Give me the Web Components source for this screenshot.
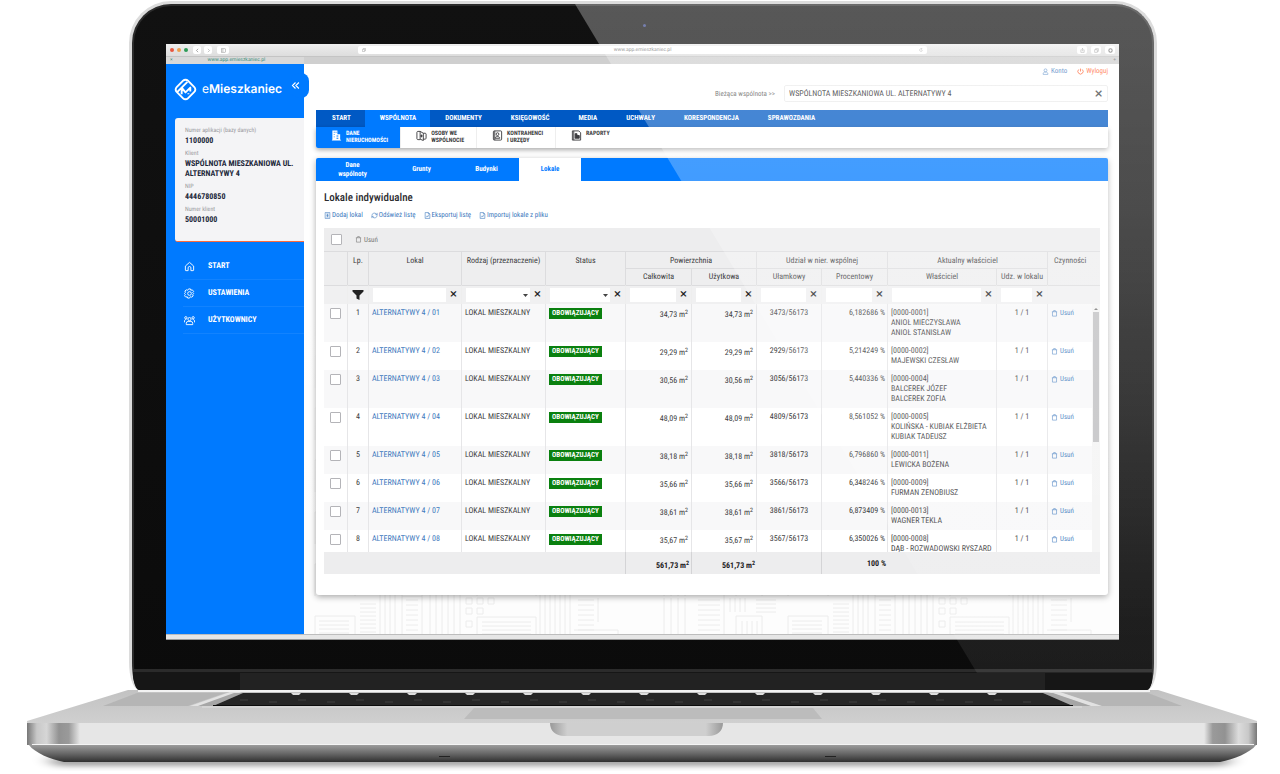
<!DOCTYPE html>
<html lang="pl">
<head>
<meta charset="utf-8">
<meta name="viewport" content="width=device-width, initial-scale=1">
<title>eMieszkaniec – Lokale indywidualne</title>
<style>
  :root {
    --blue: #007aff;
    --ink: #3c3c40;
    --link: #3c78bd;
    --line: #dcdcde;
    --fs-xs: 6px;
    --fs-s: 7px;
    --fs-m: 8px;
    --fs-l: 11px;
    --ui: "Roboto Condensed", "Liberation Sans Narrow", Roboto, sans-serif;
  }
  body { margin: 0; background: #fff; color: var(--ink); font: 8px/10px var(--ui); text-rendering: geometricPrecision; overflow-x: hidden; }
</style>
</head>
<body>
<laptop-frame>
  <browser-window>
    <app-sidebar></app-sidebar>
    <app-main>
      <account-bar></account-bar>
      <main-nav></main-nav>
      <sub-nav></sub-nav>
      <content-panel>
        <units-table></units-table>
      </content-panel>
    </app-main>
  </browser-window>
</laptop-frame>

<script>
const RESET = `
  *, *::before, *::after { box-sizing: border-box; }
  button, input, select { font: inherit; color: inherit; text-rendering: inherit; margin: 0; padding: 0; border: 0; background: none; border-radius: 0; }
  button { cursor: pointer; }
  a { color: inherit; text-decoration: none; }
  ul, dl, dd, h1 { margin: 0; padding: 0; list-style: none; }
  svg { display: block; }
`;
function define(name, css, html) {
  const tpl = document.createElement('template');
  tpl.innerHTML = `<style>${RESET}${css}</style>${html}`;
  customElements.define(name, class extends HTMLElement {
    constructor() {
      super();
      this.attachShadow({ mode: 'open' }).append(tpl.content.cloneNode(true));
    }
  });
}

const ICONS = {
  home: '<path d="M3 11 12 3l9 8v9a1 1 0 0 1-1 1h-5v-6a3 3 0 0 0-6 0v6H4a1 1 0 0 1-1-1z"/>',
  gear: '<path d="M10 2h4l1 3 3-1 3 3.500-2 2.500 2 2-2 2.500 1 3-3 2.500-3-1-2 3h-4l-1-3-3 1-3-3 2-3-2-2 2-2.500-1-3 3-2.500 3 1z"/><circle cx="12" cy="12" r="4"/>',
  users: '<circle cx="12" cy="9" r="3.500"/><path d="M5 21v-3a4 4 0 0 1 4-4h6a4 4 0 0 1 4 4v3z"/><circle cx="4" cy="6" r="2.500"/><circle cx="20" cy="6" r="2.500"/><path d="M1 16v-3c0-2 1-3 4-3M23 16v-3c0-2-1-3-4-3"/>',
  user: '<circle cx="12" cy="8" r="5"/><path d="M4 22v-3c0-3 3-5 8-5s8 2 8 5v3z"/>',
  power: '<path d="M12 2v10M6 5a9 9 0 1 0 12 0"/>',
  trash: '<path d="M3 6h18M5 6v15h14V6M9 6V2h6v4"/>',
  add: '<path d="M4 2h16v20H4zM8 7h8M8 12h8M8 17h8M12 7v10"/>',
  refresh: '<path d="M3 13a9 8 0 0 1 15-7l3 3M21 3v6h-6M21 11a9 8 0 0 1-15 7l-3-3M3 21v-6h6"/>',
  file: '<path d="M4 2h11l5 5v15H4zM15 2v5h5M8 18l3-5 2 3 3-5"/>',
  building: '<path fill="currentColor" stroke="none" d="M3 1h11v8h6v12h2v2H2v-2h1zM6 4v2h2V4zM10 4v2h2V4zM6 9v2h2V9zM6 14v2h2v-2zM12 12v2h4v-2zM12 17v2h4v-2z" fill-rule="evenodd"/>',
  people: '<path d="M9 3H4C3 3 2 4 2 5v14c0 1 1 2 2 2h5M9 3l7 4v16l-7-3zM16 7h4c1 0 2 1 2 2v9c0 1-1 2-2 2h-4M12 10v6M9 13h6"/>',
  contact: '<rect x="3" y="2" width="18" height="20" rx="2"/><circle cx="12" cy="9" r="3"/><path d="M7 18c0-5 10-5 10 0zM6 2v20"/>',
  report: '<path d="M3 2h14l4 4v16H3zM6 2v20"/><path fill="currentColor" d="M9 8h4v4h5v6H9z"/>',
  filter: '<path fill="currentColor" stroke="none" d="M1 2h22v3l-8 8v9l-6-3v-6L1 5z"/>',
  left: '<path d="M15 4l-8 8 8 8"/>',
  right: '<path d="M9 4l8 8-8 8"/>',
  double: '<path d="M12 4l-8 8 8 8M21 4l-8 8 8 8"/>',
  pane: '<rect x="2" y="4" width="20" height="16"/><path d="M9 4v16"/>',
  share: '<path d="M8 9H4v12h16V9h-4M12 15V2M8 6l4-4 4 4"/>',
  copy: '<path d="M8 8V3h13v13h-5M3 8h13v13H3z"/>',
  reload: '<path d="M20 12a8 8 0 1 1-3-6M17 1v6h-6"/>',
  ring: '<circle cx="12" cy="12" r="8"/>'
};
customElements.define('app-icon', class extends HTMLElement {
  connectedCallback() {
    if (this.shadowRoot) return;
    const w = this.getAttribute('weight') || 2;
    this.attachShadow({ mode: 'open' }).innerHTML = `
      <style>:host{display:block;flex:none;width:var(--icon,8px);height:var(--icon,8px)} svg{display:block;width:100%;height:100%}</style>
      <svg viewBox="0 0 24 24" fill="none" stroke="currentColor" stroke-width="${w}" aria-hidden="true">${ICONS[this.getAttribute('name')]}</svg>`;
  }
});

/* ---------- laptop ---------- */
const keyGaps = Array.from({ length: 13 }, (_, i) => `<path fill="#ddd" d="M${291 + i * 58} 3h10l-2 2h-6z"/>`).join('');
const keyRows = Array.from({ length: 28 }, (_, i) => `<path stroke="#404040" d="M${240 + i * 29} ${i % 2 ? 12 : 10}h8"/>`).join('');
define('laptop-frame', `
  :host { display: block; }
  .top { display: grid; grid-template-columns: 129fr 1028fr 123fr; }
  .lid { grid-column: 2; position: relative; margin-top: 1px; padding: 40px 35px 0 34px; border: 3px solid #dcdcdc; border-bottom: 0;
    border-radius: 42px 42px 10px 10px / 42px 42px 28px 28px; background: linear-gradient(#111, #0b0b0b); overflow: hidden;
    box-shadow: inset 0 0 0 2px #2c2c2c; }
  .glare { position: absolute; inset: 0; z-index: 2; pointer-events: none;
    background: linear-gradient(#ffffff4c 0%, #ffffff40 30%, #ffffff2c 60%, #ffffff14 90%, #ffffff12 97%);
    clip-path: polygon(443px 0, 100% 0, 100% 669px, 845px 669px); }
  .cam { position: absolute; top: 20px; left: 50%; width: 3px; height: 3px; border-radius: 50%; background: #3d4a8c; }
  .hinge { height: 21px; margin: 29px -33px 0; border-top: 3px solid #2b2b2b; background: #161616; display: flex; justify-content: center; }
  .hinge i { width: 79%; margin-top: 1px; background: #222; }
  .base { width: 100%; height: auto; }
`, `
  <div class="top"><div class="lid"><slot></slot><div class="hinge"><i></i></div><span class="cam"></span><div class="glare"></div></div></div>
  <svg class="base" viewBox="0 0 1280 84" aria-hidden="true">
    <defs>
      <linearGradient id="front"><stop offset="0" stop-color="#777"/><stop offset=".008" stop-color="#c8c8c8"/><stop offset=".016" stop-color="#d6d6d6"/><stop offset=".026" stop-color="#929292"/><stop offset=".034" stop-color="#9a9a9a"/><stop offset=".043" stop-color="#e6e6e6"/><stop offset=".957" stop-color="#e6e6e6"/><stop offset=".964" stop-color="#9a9a9a"/><stop offset=".974" stop-color="#929292"/><stop offset=".985" stop-color="#dcdcdc"/><stop offset=".993" stop-color="#c8c8c8"/><stop offset="1" stop-color="#777"/></linearGradient>
      <linearGradient id="deck" x2="0" y2="1"><stop offset="0" stop-color="#c2c2c2"/><stop offset="1" stop-color="#d0d0d0"/></linearGradient>
      <linearGradient id="under" x2="0" y2="1"><stop offset="0" stop-color="#9c9c9c"/><stop offset=".5" stop-color="#686868"/><stop offset="1" stop-color="#303030"/></linearGradient>
      <linearGradient id="notch"><stop offset="0" stop-color="#999"/><stop offset=".1" stop-color="#cfcfcf"/><stop offset=".9" stop-color="#cfcfcf"/><stop offset="1" stop-color="#999"/></linearGradient>
      <filter id="soft" x="-5%" y="-100%" width="110%" height="300%"><feGaussianBlur stdDeviation="8 3"/></filter>
    </defs>
    <path fill="#000" opacity=".5" filter="url(#soft)" d="M45 69h1190l-12 6H57z"/>
    <path fill="url(#deck)" d="M128 0h1030l99 31v3H27v-3z"/>
    <path fill="#f2f2f2" d="M138 0h1012v2H138z"/>
    <path fill="#b5b5b5" d="M137 3h88l-37 13h-85zM1062 3h86l34 13h-82z"/>
    <path fill="#e2e2e2" d="M230 2h12l-40 14h-12zM1048 2h12l42 14h-12z"/>
    <path fill="#a6a6a6" d="M234 3h9l-30 13h-15zM1043 3h10l38 13h-18z"/>
    <path fill="#262626" d="M243 3h800l30 13H213z"/>
    ${keyGaps}${keyRows}
    <path stroke="#0c0c0c" d="M213 15.500h860"/>
    <path stroke="#eee" d="M202 17h880" opacity=".6"/>
    <path fill="#bcbcbc" d="M474 18h339l9 11H464z"/>
    <path fill="url(#front)" d="M27 33h1230v22H27z"/>
    <path fill="url(#notch)" d="M550 33h173c0 8-6 13-14 13H564c-8 0-14-5-14-13z"/>
    <path fill="#f4f4f4" d="M32 54h1222v1H32z"/>
    <path fill="url(#under)" d="M29 55h1227c-6 8-22 14-36 17H64C50 69 35 63 29 55z"/>
    <path fill="#222" d="M439 66h11v1h-11zM825 66h11v1h-11z"/>
  </svg>
`);

/* ---------- browser ---------- */
define('browser-window', `
  :host { display: block; background: #fff; color: #777; }
  .bar { display: grid; grid-template-columns: 192px 1fr 192px; align-items: center; height: 12px; background: linear-gradient(#eee, #ddd); }
  .left, .right { display: flex; align-items: center; gap: 4px; padding: 0 4px; --icon: 5px; }
  .right { justify-content: flex-end; }
  .dot { width: 4px; height: 4px; border-radius: 50%; background: #e8573f; }
  .dot:nth-child(2) { background: #eda04e; } .dot:nth-child(3) { background: #2e9b57; margin-right: 2px; }
  .left { gap: 3px; }
  button { display: grid; place-items: center; width: 10px; height: 8px; border-radius: 2px; background: #fff; }
  .left button { width: 8px; } .left button:last-child { margin-left: 2px; width: 12px; }
  .url { display: flex; align-items: center; justify-content: space-between; height: 8px; padding: 0 4px; border-radius: 2px; background: #fff; --icon: 4px; }
  .url input { width: 70px; height: 8px; text-align: center; font: 5px/8px Roboto, sans-serif; }
  .tabs { display: flex; height: 8px; background: #cfcfcf; border-top: 1px solid #c4c4c4; font: 5px/7px Roboto, sans-serif; }
  .tab { display: flex; width: 138px; padding: 0 4px; background: #d9d9d9; color: #3f8f7c; }
  .tab a { flex: 1; text-align: center; }
  .plus { margin-left: auto; padding-right: 3px; }
  .app { display: grid; grid-template-columns: 138px 1fr; font: var(--fs-m)/10px var(--ui); color: var(--ink); }
  .status { height: 6px; background: #e6e6e6; border-top: 1px solid #bdbdbd; border-bottom: 1px solid #999; }
`, `
  <div class="bar">
    <div class="left"><i class="dot"></i><i class="dot"></i><i class="dot"></i>
      <button aria-label="Wstecz"><app-icon name="left" weight="3"></app-icon></button><button aria-label="Dalej"><app-icon name="right"></app-icon></button><button aria-label="Panel boczny"><app-icon name="pane"></app-icon></button></div>
    <div class="url"><app-icon name="copy"></app-icon><input aria-label="Adres strony" value="www.app.emieszkaniec.pl"><app-icon name="reload"></app-icon></div>
    <div class="right"><button aria-label="Udostępnij"><app-icon name="share"></app-icon></button><button aria-label="Karty"><app-icon name="copy"></app-icon></button><button aria-label="Pobrane"><app-icon name="ring" weight="5"></app-icon></button></div>
  </div>
  <div class="tabs"><div class="tab"><span>×</span><a href="#">www.app.emieszkaniec.pl</a></div><span class="plus">+</span></div>
  <div class="app"><slot></slot></div>
  <div class="status"></div>
`);

/* ---------- sidebar ---------- */
define('app-sidebar', `
  :host { display: block; position: relative; z-index: 1; background: var(--blue); color: #fff; }
  .brand { display: flex; align-items: center; gap: 5px; height: 54px; padding: 0 0 4px 8px; }
  .brand svg { width: 23px; height: 23px; }
  .brand a { font: 600 12px/16px Inter, sans-serif; }
  .brand a span { font-weight: 400; }
  .toggle { position: absolute; top: 9px; right: -5px; width: 18px; height: 25px; border-radius: 8px; background: var(--blue); color: #fff; --icon: 9px; }
  .card { margin-left: 9px; padding: 8px 4px 16px 10px; border-radius: 3px 0 0 3px; border-bottom: 1px solid #ff6a3c; background: #f4f4f6; color: #22283a; }
  dt { color: #9a9a9e; font-size: var(--fs-xs); }
  dd { font-weight: 700; } dd + dt { margin-top: 3px; }
  nav { padding: 11px 0 0 17px; }
  nav a { display: flex; align-items: center; gap: 13px; height: 27px; padding-left: 1px; border-bottom: 1px solid #1283ff; font-weight: 700; --icon: 11px; }
`, `
  <div class="brand">
    <svg viewBox="0 0 24 24" fill="none" stroke="#fff" stroke-width="2" stroke-linejoin="round" aria-hidden="true"><path d="M9.500 2.800a3.500 3.500 0 0 1 5 0L21.200 9.500a3.500 3.500 0 0 1 0 5L14.500 21.200a3.500 3.500 0 0 1-5 0L2.800 14.500a3.500 3.500 0 0 1 0-5z"/><path d="M3 15 14 4M8 17V10l4 5 5-5v4M15 17v-1"/></svg>
    <a href="#"><span>e</span>Mieszkaniec</a>
  </div>
  <button class="toggle" aria-label="Zwiń menu"><app-icon name="double" weight="3"></app-icon></button>
  <dl class="card">
    <dt>Numer aplikacji (bazy danych)</dt><dd>1100000</dd>
    <dt>Klient</dt><dd>WSPÓLNOTA MIESZKANIOWA UL. ALTERNATYWY 4</dd>
    <dt>NIP</dt><dd>4446780850</dd>
    <dt>Numer klient</dt><dd>50001000</dd>
  </dl>
  <nav><a href="#"><app-icon name="home"></app-icon>START</a><a href="#"><app-icon name="gear"></app-icon>USTAWIENIA</a><a href="#"><app-icon name="users"></app-icon>UŻYTKOWNICY</a></nav>
`);

/* ---------- main area ---------- */
const ticks = (x, y, w, n, s) => Array.from({ length: n }, (_, i) => `M${x} ${y + i * s}h${w}`).join('');
const bars = (x, y, h, n, s) => Array.from({ length: n }, (_, i) => `M${x + i * s} ${y}v${h}`).join('');
const cityTile = [
  'M11 52V20h40v32', ticks(15, 25, 30, 5, 4), ticks(56, 8, 16, 8, 4), bars(76, 0, 52, 4, 5),
  'M98 52V0h20v52', ticks(102, 4, 12, 9, 5), bars(126, 0, 52, 6, 6),
  'M162 2h6v6h-6zM173 2h6v6h-6zM184 2h6v6h-6zM162 12h6v6h-6zM162 25h6v6h-6zM173 12h6v6h-6z', 'M173 52V21h59v31', ticks(178, 26, 49, 5, 4),
  bars(236, 0, 52, 7, 5), ticks(274, 4, 16, 8, 5), 'M294 2v24M270 34h44v4',
  bars(360, 2, 50, 4, 7), ticks(394, 4, 22, 10, 5), 'M420 0v52', bars(426, 2, 14, 4, 5),
  'M432 52V20h26v32', ticks(452, 4, 20, 4, 4), bars(438, 25, 26, 4, 5)
].join('');
define('app-main', `
  :host { display: block; position: relative; padding: 0 11px 39px 12px; background: #fdfdfd; }
  .city { position: absolute; left: 0; right: 0; bottom: 0; width: 100%; height: 100%; }
  .body { position: relative; }
`, `
  <svg class="city" aria-hidden="true"><defs><pattern id="city" width="473" height="52" y="12" patternUnits="userSpaceOnUse"><path d="${cityTile}" fill="none" stroke="#ececec"/></pattern>
    <linearGradient id="fade" x2="0" y2="1"><stop offset=".5" stop-color="#fff"/><stop offset="1" stop-color="#fff" stop-opacity="0"/></linearGradient></defs>
    <rect width="100%" height="100%" fill="url(#city)"/><rect width="100%" height="90%" fill="url(#fade)"/></svg>
  <div class="body"><slot></slot></div>
`);

define('account-bar', `
  :host { display: block; padding-bottom: 8px; }
  .links { display: flex; justify-content: flex-end; gap: 10px; height: 14px; font-size: var(--fs-s); --icon: 7px; }
  .links a { display: flex; align-items: center; gap: 2px; color: var(--link); }
  .links a + a { color: #ff5a28; }
  .pick { display: flex; align-items: center; justify-content: flex-end; gap: 9px; margin-top: 7px; }
  label { color: #555; font-size: var(--fs-s); }
  .field { display: flex; width: 324px; height: 17px; border: 1px solid #ebebeb; border-radius: 2px; background: #fff; }
  input { flex: 1; padding-left: 4px; color: #222; }
  button { width: 17px; font: 700 11px/12px "DejaVu Sans", sans-serif; }
`, `
  <div class="links"><a href="#"><app-icon name="user"></app-icon>Konto</a><a href="#"><app-icon name="power" weight="3"></app-icon>Wyloguj</a></div>
  <div class="pick"><label for="w">Bieżąca wspólnota &gt;&gt;</label><div class="field"><input id="w" value="WSPÓLNOTA MIESZKANIOWA UL. ALTERNATYWY 4"><button aria-label="Wyczyść">×</button></div></div>
`);

define('main-nav', `
  :host { display: block; }
  nav { display: flex; height: 17px; padding-left: 1px; background: #0059c4; color: #fff; font-size: var(--fs-s); font-weight: 700; }
  a { padding: 3px 14px 0 15px; } a.on { background: var(--blue); }
`, `<nav><a href="#">START</a><a href="#" class="on">WSPÓLNOTA</a><a href="#">DOKUMENTY</a><a href="#">KSIĘGOWOŚĆ</a><a href="#">MEDIA</a><a href="#">UCHWAŁY</a><a href="#">KORESPONDENCJA</a><a href="#">SPRAWOZDANIA</a></nav>`);

define('sub-nav', `
  :host { display: block; }
  nav { display: flex; height: 21px; border-radius: 0 0 2px 2px; background: #fff; box-shadow: 0 2px 5px #0005; font: 700 var(--fs-xs)/7px var(--ui); }
  a { display: flex; gap: 4px; padding: 3px 12px 0 15px; border-right: 1px solid #eee; --icon: 11px; }
  a.on { background: var(--blue); color: #fff; border-radius: 0 0 0 2px; }
  a:last-child { border: 0; }
`, `<nav><a href="#" class="on"><app-icon name="building"></app-icon><span>DANE<br>NIERUCHOMOŚCI</span></a><a href="#"><app-icon name="people"></app-icon><span>OSOBY WE<br>WSPÓLNOCIE</span></a><a href="#"><app-icon name="contact"></app-icon><span>KONTRAHENCI<br>I URZĘDY</span></a><a href="#"><app-icon name="report"></app-icon><span>RAPORTY</span></a></nav>`);

define('content-panel', `
  :host { display: block; margin-top: 10px; border-radius: 3px; background: #fff; box-shadow: 0 2px 6px #0005; }
  .tabs { display: flex; height: 23px; background: var(--blue); color: #fff; border-radius: 2px 2px 0 0; font: 700 var(--fs-s)/9px var(--ui); }
  .tabs a { display: grid; place-items: center; width: 65px; text-align: center; }
  .tabs a:first-child { width: 73px; padding: 0 20px; }
  .tabs a.on { width: 62px; background: #fff; color: var(--blue); }
  .in { padding: 9px 8px 21px; }
  h1 { font: 500 var(--fs-l)/16px var(--ui); color: #2c2c30; }
  .tools { display: flex; gap: 8px; margin: 4px 0 8px; color: var(--link); font-size: var(--fs-s); --icon: 7px; }
  .tools a { display: flex; align-items: center; gap: 1px; }
`, `
  <nav class="tabs"><a href="#">Dane wspólnoty</a><a href="#">Grunty</a><a href="#">Budynki</a><a href="#" class="on">Lokale</a></nav>
  <div class="in"><h1>Lokale indywidualne</h1>
  <div class="tools"><a href="#"><app-icon name="add"></app-icon>Dodaj lokal</a><a href="#"><app-icon name="refresh"></app-icon>Odśwież listę</a><a href="#"><app-icon name="file"></app-icon>Eksportuj listę</a><a href="#"><app-icon name="file"></app-icon>Importuj lokale z pliku</a></div>
  <slot></slot></div>
`);

/* ---------- table ---------- */
const ROWS = [
  ['34,73', '3473', '6,182686', '0001', 'ANIOŁ MIECZYSŁAWA', 'ANIOŁ STANISŁAW'],
  ['29,29', '2929', '5,214249', '0002', 'MAJEWSKI CZESŁAW'],
  ['30,56', '3056', '5,440336', '0004', 'BALCEREK JÓZEF', 'BALCEREK ZOFIA'],
  ['48,09', '4809', '8,561052', '0005', 'KOLIŃSKA - KUBIAK ELŻBIETA', 'KUBIAK TADEUSZ'],
  ['38,18', '3818', '6,796860', '0011', 'LEWICKA BOŻENA'],
  ['35,66', '3566', '6,348246', '0009', 'FURMAN ZENOBIUSZ'],
  ['38,61', '3861', '6,873409', '0013', 'WAGNER TEKLA'],
  ['35,67', '3567', '6,350026', '0008', 'DĄB - ROZWADOWSKI RYSZARD']
];
const cols = last => '<colgroup>' + [24, 21, 93, 84, 80, 66, 65, 65, 66, 109, 51, last].map(w => `<col style="width:${w}px">`).join('') + '</colgroup>';
const clear = '<button class="x" aria-label="Wyczyść filtr">×</button>';
const text = n => `<td><div class="f"><input type="text" aria-label="Filtr: ${n}">${clear}</div></td>`;
const pick = n => `<td><div class="f"><select aria-label="Filtr: ${n}"><option></option></select>${clear}</div></td>`;
const body = ROWS.map(([m, u, p, id, ...who], i) => `
  <tr><td class="c"><input type="checkbox" aria-label="Zaznacz ${i + 1}"></td><td class="c">${i + 1}</td>
  <td class="l"><a href="#">ALTERNATYWY 4 / 0${i + 1}</a></td><td class="l">LOKAL MIESZKALNY</td><td class="l"><b class="ok">OBOWIĄZUJĄCY</b></td>
  <td class="m">${m} m<sup>2</sup></td><td class="m">${m} m<sup>2</sup></td><td class="c">${u}/56173</td><td class="p">${p} %</td>
  <td class="l">[0000-${id}]<br>${who.join('<br>')}</td><td class="c">1 / 1</td><td class="l"><a href="#" class="del"><app-icon name="trash"></app-icon>Usuń</a></td></tr>`).join('');
define('units-table', `
  :host { display: block; }
  .bar { display: flex; align-items: center; height: 24px; padding-left: 7px; gap: 13px; background: #ededee; border-bottom: 1px solid var(--line); --icon: 7px; }
  .bar button, .del { display: flex; align-items: center; gap: 2px; font-size: var(--fs-s); }
  .bar button { color: #777; }
  .del { --icon: 7px; }
  table { width: 100%; table-layout: fixed; border-collapse: separate; border-spacing: 0; }
  th, td { padding: 0; font-weight: 400; vertical-align: top; border-right: 1px solid var(--line); }
  tr > :last-child { border-right: 0; }
  thead { background: #eeeeef; }
  thead th { height: 16px; padding: 3px 0 0; line-height: 10px; white-space: nowrap; }
  thead tr:first-child th { height: 17px; padding-top: 4px; }
  thead th[colspan] { border-bottom: 1px solid var(--line); }
  thead tr:nth-child(2) > :last-child { border-right: 1px solid var(--line); }
  thead tr:first-child > :last-child { text-align: left; padding-left: 6px; }
  .filters td { height: 19px; border-top: 1px solid var(--line); border-right-color: #eee; background: #f0f0f1; vertical-align: middle; }
  .f { display: flex; align-items: center; padding-left: 4px; }
  .f input, .f select { flex: 1; min-width: 0; height: 14px; background-color: #fff; appearance: none; }
  .f select { background: #fff url("data:image/svg+xml,%3Csvg xmlns='http://www.w3.org/2000/svg' width='5' height='3'%3E%3Cpath d='M0 0h5L2.500 3z' fill='%23444'/%3E%3C/svg%3E") no-repeat right 2px top 6px; }
  .x { flex: none; width: 15px; height: 14px; font: 700 10px/12px "DejaVu Sans", sans-serif; color: #222; }
  .filters app-icon { --icon: 12px; margin: 0 auto; color: #222; }
  .view { display: grid; grid-template-columns: 1fr 8px; height: 248px; overflow: hidden; }
  tbody td { padding: 4px 3px; line-height: 10px; white-space: nowrap; border-right-color: #e6e6e8; }
  tbody tr:nth-child(odd) { background: #f8f8f9; }
  tbody a { color: var(--link); }
  .c { text-align: center; } .c, .m, .p { padding-left: 0; }
  tbody td.c { padding-left: 0; padding-right: 0; }
  td.m { padding-top: 6px; padding-bottom: 0; text-align: right; }
  td.p { padding-right: 2px; text-align: right; }
  sup { font-size: var(--fs-xs); line-height: 0; vertical-align: 3px; }
  .ok { display: block; width: max-content; margin-bottom: -1px; padding: 0 3px; background: #0a800f; color: #fff; font-size: var(--fs-s); line-height: 11px; }
  [type=checkbox] { display: block; appearance: none; width: 11px; height: 11px; border: 1px solid #b4b4b8; border-radius: 1px; background: #fff; }
  td [type=checkbox] { margin: 0 auto; }
  .scroll { display: flex; flex-direction: column; align-items: center; background: #f4f4f4; padding: 4px 0 3px; }
  .scroll i { border: 2px solid transparent; border-top-width: 0; border-bottom: 2px solid #777; }
  .scroll i:last-child { margin-top: auto; border-width: 2px 2px 0; border-top: 2px solid #333; border-bottom: 0; }
  .scroll b { width: 6px; height: 130px; margin-top: 2px; background: #c1c1c3; }
  tfoot td { height: 22px; padding: 9px 2px 0 0; background: #ededee; font-weight: 700; text-align: right; color: #222; white-space: nowrap; border-color: #d4d4d6; }
  tfoot .p { padding-top: 7px; }
  tfoot .nb { border-right: 0; }
`, `
  <div class="bar"><input type="checkbox" aria-label="Zaznacz wszystkie"><button><app-icon name="trash"></app-icon>Usuń</button></div>
  <table>${cols(52)}<thead>
    <tr><th rowspan="2"></th><th rowspan="2">Lp.</th><th rowspan="2">Lokal</th><th rowspan="2">Rodzaj (przeznaczenie)</th><th rowspan="2">Status</th><th colspan="2">Powierzchnia</th><th colspan="2">Udział w nier. wspólnej</th><th colspan="2">Aktualny właściciel</th><th rowspan="2">Czynności</th></tr>
    <tr><th>Całkowita</th><th>Użytkowa</th><th>Ułamkowy</th><th>Procentowy</th><th>Właściciel</th><th>Udz. w lokalu</th></tr>
    <tr class="filters"><td></td><td><app-icon name="filter"></app-icon></td>${text('Lokal')}${pick('Rodzaj')}${pick('Status')}${text('Całkowita')}${text('Użytkowa')}${text('Ułamkowy')}${text('Procentowy')}${text('Właściciel')}${text('Udz. w lokalu')}<td></td></tr>
  </thead></table>
  <div class="view"><table>${cols(44)}<tbody>${body}</tbody></table><div class="scroll"><i></i><b></b><i></i></div></div>
  <table>${cols(52)}<tfoot><tr><td colspan="5"></td><td>561,73 m<sup>2</sup></td><td class="nb">561,73 m<sup>2</sup></td><td></td><td class="p nb">100 %</td><td class="nb"></td><td class="nb"></td><td></td></tr></tfoot></table>
`);
</script>
</body>
</html>
